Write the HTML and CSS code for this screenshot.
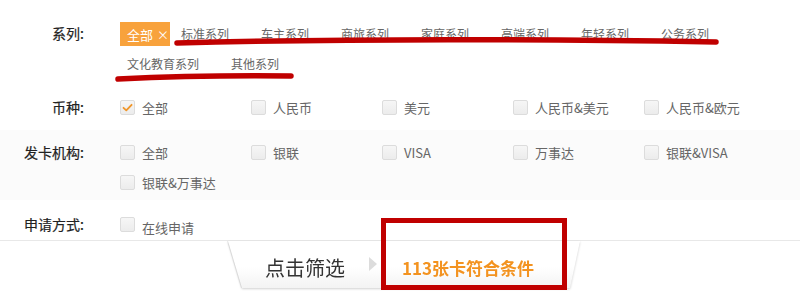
FILE: index.html
```html
<!DOCTYPE html>
<html lang="zh-CN">
<head>
<meta charset="utf-8">
<link rel="stylesheet" href="styles.css">
</head>
<body>
<div class="page">
  <div class="row row-series">
    <div class="label">系列:</div>
    <div class="series">
      <span class="tag">全部 <span class="x">×</span></span>
      <span class="item">标准系列</span>
      <span class="item">车主系列</span>
      <span class="item">商旅系列</span>
      <span class="item">家庭系列</span>
      <span class="item">高端系列</span>
      <span class="item">年轻系列</span>
      <span class="item">公务系列</span>
      <span class="item">文化教育系列</span>
      <span class="item">其他系列</span>
    </div>
  </div>
  <div class="row row-currency">
    <div class="label">币种:</div>
    <div class="checks">
      <label class="check"><span class="box checked"><svg viewBox="0 0 15 15" width="15" height="15"><path d="M3.5 7.8 L6.3 10.4 L11.6 4.8" fill="none" stroke="#f0962a" stroke-width="1.8" stroke-linecap="round" stroke-linejoin="round"/></svg></span>全部</label>
      <label class="check"><span class="box"></span>人民币</label>
      <label class="check"><span class="box"></span>美元</label>
      <label class="check"><span class="box"></span>人民币&amp;美元</label>
      <label class="check"><span class="box"></span>人民币&amp;欧元</label>
    </div>
  </div>
  <div class="row row-issuer">
    <div class="label">发卡机构:</div>
    <div class="checks">
      <label class="check"><span class="box"></span>全部</label>
      <label class="check"><span class="box"></span>银联</label>
      <label class="check"><span class="box"></span>VISA</label>
      <label class="check"><span class="box"></span>万事达</label>
      <label class="check"><span class="box"></span>银联&amp;VISA</label>
      <label class="check"><span class="box"></span>银联&amp;万事达</label>
    </div>
  </div>
  <div class="row row-apply">
    <div class="label">申请方式:</div>
    <div class="checks">
      <label class="check"><span class="box"></span><span class="low">在线申请</span></label>
    </div>
  </div>
  <div class="footer">
    <div class="tab-wrap">
      <div class="tab">
        <span class="filter">点击筛选</span>
        <span class="arrow"></span>
        <span class="result">113张卡符合条件</span>
      </div>
    </div>
  </div>

  <svg class="marks" width="800" height="293" viewBox="0 0 800 293">
    <path d="M177 43 Q 400 37 716 42" fill="none" stroke="#c00000" stroke-width="5.5" stroke-linecap="round"/>
    <path d="M118 79 Q 200 75 291 76" fill="none" stroke="#c00000" stroke-width="5.5" stroke-linecap="round"/>
  </svg>
  <div class="redbox"></div>
</div>
</body>
</html>
```

FILE: styles.css
```css
* { box-sizing: border-box; }
html, body {
  margin: 0;
  padding: 0;
  background: #fff;
}
body {
  font-family: "Noto Sans CJK SC", "Microsoft YaHei", sans-serif;
  color: #333;
  width: 800px;
  height: 293px;
  overflow: hidden;
}
.page {
  position: relative;
  width: 800px;
  height: 293px;
}
.row {
  display: flex;
  align-items: flex-start;
}
.label {
  width: 84px;
  flex: none;
  text-align: right;
  font-size: 14px;
  line-height: 24px;
  height: 24px;
  color: #222;
  margin-right: 36px;
  -webkit-text-stroke: 0.2px #222;
}
.row-series {
  padding-top: 22px;
  height: 90px;
}
.row-series .label { line-height: 22px; }
.series {
  display: flex;
  flex-wrap: wrap;
  row-gap: 6px;
  width: 680px;
}
.tag {
  display: inline-flex;
  align-items: center;
  height: 24px;
  width: 50px;
  padding-left: 7px;
  background: #f8a23c;
  color: #fff;
  font-size: 13px;
  margin-right: 4px;
}
.tag .x { font-size: 12px; margin-left: 4px; }
.item {
  display: inline-block;
  padding: 0 7px;
  margin-right: 18px;
  font-size: 12px;
  line-height: 24px;
  height: 24px;
  color: #666;
}
.row-currency {
  height: 40px;
  padding-top: 5px;
}
.row-issuer {
  height: 70px;
  padding-top: 10px;
  background: #fbfbfb;
}
.row-apply {
  height: 40px;
  padding-top: 12px;
}
.checks {
  display: flex;
  flex-wrap: wrap;
  row-gap: 6px;
  width: 680px;
}
.check {
  display: flex;
  align-items: center;
  width: 131px;
  height: 24px;
  font-size: 13px;
  color: #666;
}
.box {
  width: 15px;
  height: 15px;
  border: 1px solid #dcdcdc;
  background: linear-gradient(#f6f6f6, #ececec);
  border-radius: 2px;
  margin-right: 7px;
  flex: none;
  display: flex;
}
.box svg { margin: -1px; }
.low { position: relative; top: 3px; }
.footer {
  border-top: 1px solid #e8e8e8;
  height: 53px;
}
.tab-wrap {
  margin-left: 228px;
  width: 352px;
  filter: drop-shadow(0 1px 1px rgba(0,0,0,0.18)) drop-shadow(-0.5px 0 0 rgba(0,0,0,0.08));
}
.tab {
  height: 47px;
  clip-path: polygon(0 0, 100% 0, calc(100% - 10px) 100%, 14px 100%);
  background: linear-gradient(#fff 55%, #f3f3f3);
  display: flex;
  align-items: center;
  padding-top: 5px;
}
.filter {
  margin-left: 37px;
  font-size: 20px;
  color: #333;
}
.arrow {
  margin-left: 24px;
  width: 0;
  height: 0;
  border-top: 7px solid transparent;
  border-bottom: 7px solid transparent;
  border-left: 8px solid #dcdcdc;
  margin-top: -6px;
}
.result {
  margin-left: 25px;
  font-size: 17px;
  font-weight: bold;
  color: #f39320;
}
.marks {
  position: absolute;
  left: 0;
  top: 0;
  pointer-events: none;
}
.redbox {
  position: absolute;
  left: 381px;
  top: 218px;
  width: 186px;
  height: 72px;
  border: 5px solid #c00000;
  pointer-events: none;
}
```
